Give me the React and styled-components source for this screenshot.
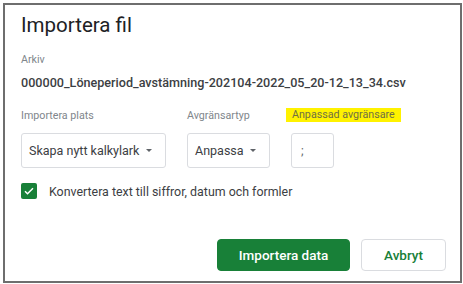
import styled, { createGlobalStyle } from 'styled-components';

const Global = createGlobalStyle`
	html, body {
		margin: 0;
		padding: 0;
		background: #fff;
	}
	body {
		font-family: Roboto, "Liberation Sans", Arial, sans-serif;
		color: #3c4043;
	}
`;

const Frame = styled.div`
	box-sizing: border-box;
	display: flex;
	flex-direction: column;
	width: 459px;
	height: 280px;
	margin: 3px 0 0 3px;
	padding: 6px 14px 10px 16px;
	border: 2px solid #6e6e6e;
	background: #fff;
`;

const Title = styled.h1`
	margin: 0;
	font-size: 20.5px;
	line-height: 28px;
	font-weight: 400;
	color: #202124;
`;

const Label = styled.div`
	display: flex;
	align-items: center;
	height: 16px;
	font-size: 10.7px;
	color: #80868b;
	white-space: nowrap;
	margin-top: ${(p) => p.$top || 0}px;
`;

const Highlight = styled.span`
	display: inline-block;
	margin-left: -5px;
	padding: 0 6px;
	line-height: 14px;
	background: #fff200;
	color: #6f6f45;
`;

const FileName = styled.div`
	margin-top: 7px;
	font-size: 12.6px;
	line-height: 18px;
	font-weight: 500;
	color: #3c4043;
	white-space: nowrap;
`;

const Row = styled.div`
	display: flex;
	gap: 21px;
	margin-top: 15px;
`;

const Field = styled.div`
	display: flex;
	flex-direction: column;
	gap: 10px;
`;

const Select = styled.div`
	box-sizing: border-box;
	display: flex;
	align-items: center;
	justify-content: space-between;
	width: ${(p) => p.$width}px;
	height: 35px;
	padding: 0 13px 0 7px;
	border: 1px solid #dadce0;
	border-radius: 3px;
	font-size: 12.5px;
	color: #3c4043;
	white-space: nowrap;
`;

const Caret = styled.span`
	width: 0;
	height: 0;
	border-left: 3.5px solid transparent;
	border-right: 3.5px solid transparent;
	border-top: 3.5px solid #5f6368;
`;

const Input = styled.div`
	box-sizing: border-box;
	width: 43px;
	height: 35px;
	padding: 0 9px;
	border: 1px solid #dadce0;
	border-radius: 3px;
	display: flex;
	align-items: center;
	font-size: 12.5px;
	color: #5f6368;
`;

const CheckRow = styled.label`
	display: flex;
	align-items: center;
	gap: 12px;
	height: 18px;
	margin-top: 14px;
	font-size: 12.4px;
	color: #3c4043;
	white-space: nowrap;
`;

const Box = styled.span`
	display: flex;
	align-items: center;
	justify-content: center;
	width: 16px;
	height: 16px;
	border-radius: 2px;
	background: #188038;
`;

const Footer = styled.div`
	display: flex;
	justify-content: flex-end;
	gap: 11px;
	margin-top: auto;
`;

const Button = styled.button`
	box-sizing: border-box;
	width: ${(p) => p.$width}px;
	height: 32px;
	border-radius: 4px;
	font-family: Roboto, "Liberation Sans", Arial, sans-serif;
	font-size: 13.5px;
	font-weight: 500;
	cursor: pointer;
	border: 1px solid ${(p) => (p.$primary ? '#188038' : '#dadce0')};
	background: ${(p) => (p.$primary ? '#188038' : '#fff')};
	color: ${(p) => (p.$primary ? '#fff' : '#188038')};
`;

const App = () => {
	return (
		<>
			<Global />
			<Frame>
				<Title>Importera fil</Title>
				<Label $top={12}>Arkiv</Label>
				<FileName>
					000000_Löneperiod_avstämning-202104-2022_05_20-12_13_34.csv
				</FileName>
				<Row>
					<Field>
						<Label>Importera plats</Label>
						<Select $width={145}>
							Skapa nytt kalkylark
							<Caret />
						</Select>
					</Field>
					<Field>
						<Label>Avgränsartyp</Label>
						<Select $width={83}>
							Anpassa
							<Caret />
						</Select>
					</Field>
					<Field>
						<Label>
							<Highlight>Anpassad avgränsare</Highlight>
						</Label>
						<Input>;</Input>
					</Field>
				</Row>
				<CheckRow>
					<Box>
						<svg width="12" height="12" viewBox="0 0 24 24">
							<path
								d="M4 12.5l5 5L20 6.5"
								fill="none"
								stroke="#fff"
								strokeWidth="3"
							/>
						</svg>
					</Box>
					Konvertera text till siffror, datum och formler
				</CheckRow>
				<Footer>
					<Button $primary $width={133}>
						Importera data
					</Button>
					<Button $width={85}>Avbryt</Button>
				</Footer>
			</Frame>
		</>
	);
};

export default App;
